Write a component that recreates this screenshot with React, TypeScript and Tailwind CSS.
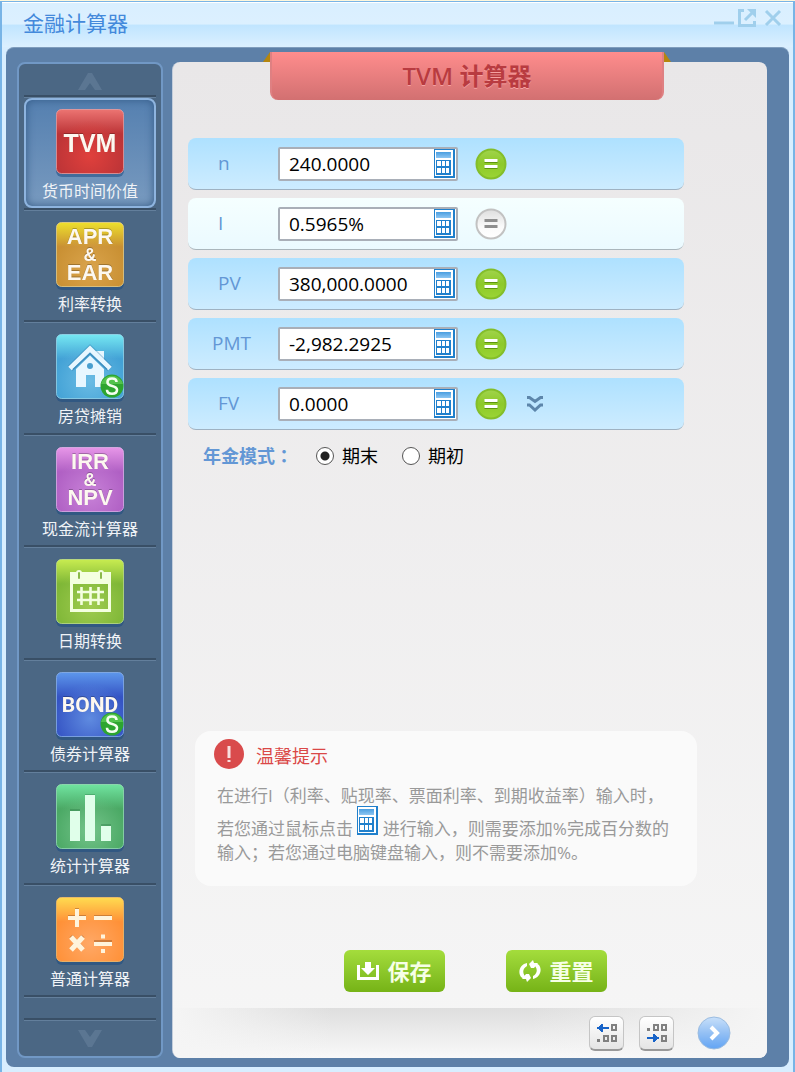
import React from "react";

const fonts = "[font-family:'Open_Sans','Noto_Sans_CJK_SC',sans-serif]";

function CalcGlyph({ className }: { className: string }) {
  return (
    <svg viewBox="0 0 21 29" className={className} aria-hidden="true" shapeRendering="crispEdges">
      <defs>
        <linearGradient id="lcd" x1="0" y1="0" x2="0" y2="1">
          <stop offset="0" stopColor="#4a9ee0" />
          <stop offset="1" stopColor="#8ec6f2" />
        </linearGradient>
      </defs>
      <rect width="21" height="29" fill="#2080cc" />
      <rect x="1" y="1" width="18" height="26" fill="#fff" />
      <rect x="2" y="3" width="15" height="6" fill="url(#lcd)" />
      <rect x="2" y="11" width="15" height="15" fill="#2080cc" />
      {[3, 8, 12].map((x) => (
        <g key={x} fill="#fff">
          <rect x={x} y="12" width={x === 3 ? 4 : 3} height="5" />
          <rect x={x} y="19" width={x === 3 ? 4 : 3} height="5" />
        </g>
      ))}
    </svg>
  );
}

type Tone = { a: string; b: string; c: string; edge: string };

function Tile({ id, tone, children }: { id: string; tone: Tone; children: React.ReactNode }) {
  return (
    <svg viewBox="0 0 70 70" className="size-[70px] shrink-0" aria-hidden="true">
      <defs>
        <linearGradient id={id + "-l"} x1="0" y1="0" x2="0" y2="1">
          <stop offset="0" stopColor={tone.a} />
          <stop offset="0.38" stopColor={tone.b} />
          <stop offset="1" stopColor={tone.b} />
        </linearGradient>
        <radialGradient id={id + "-r"} cx="0.5" cy="0.72" r="0.55">
          <stop offset="0" stopColor={tone.c} />
          <stop offset="1" stopColor={tone.c} stopOpacity="0" />
        </radialGradient>
      </defs>
      <rect x="1" y="3" width="68" height="66" rx="6" fill="#1d4c82" opacity="0.55" />
      <rect x="1.5" y="1.5" width="67" height="64" rx="5" fill={"url(#" + id + "-l)"} />
      <rect x="1.5" y="1.5" width="67" height="64" rx="5" fill={"url(#" + id + "-r)"} stroke={tone.edge} strokeOpacity="0.75" />
      {children}
    </svg>
  );
}

function TileText({ x = 35, y, size, children, font = "Liberation Sans" }: { x?: number; y: number; size: number; children: string; font?: string }) {
  return (
    <text
      x={x}
      y={y}
      fill="#fdf8f0"
      fontFamily={"'" + font + "', sans-serif"}
      fontWeight="700"
      fontSize={size}
      textAnchor="middle"
      className="[filter:drop-shadow(0_-1px_0_#00000040)]"
    >
      {children}
    </text>
  );
}

function Coin() {
  return (
    <g>
      <circle cx="57" cy="53" r="11.5" fill="#2da52f" />
      <path d="M46 51a11.5 11.5 0 0 1 22 0z" fill="#62d058" opacity="0.7" />
      <path d="M61.5 49c0-2.5-2-3.500-4.500-3.500s-4.500 1.200-4.500 3.700c0 5 9.500 2.600 9.500 7.600 0 2.500-2.200 3.900-5 3.900s-5-1.200-5-4" fill="none" stroke="#f4fff0" strokeWidth="2.600" />
    </g>
  );
}

const items: { name: string; tone: Tone; art: React.ReactNode }[] = [
  {
    name: "货币时间价值",
    tone: { a: "#ec7472", b: "#bc3437", c: "#e0403c", edge: "#f0a0a0" },
    art: <TileText y={44} size={25}>TVM</TileText>,
  },
  {
    name: "利率转换",
    tone: { a: "#eee02c", b: "#c99033", c: "#daa44c", edge: "#f0d489" },
    art: (
      <>
        <TileText y={23} size={22}>APR</TileText>
        <TileText y={40} size={18}>&amp;</TileText>
        <TileText y={59} size={22}>EAR</TileText>
      </>
    ),
  },
  {
    name: "房贷摊销",
    tone: { a: "#75e8f2", b: "#43a2d6", c: "#6bbce4", edge: "#9bdcf0" },
    art: (
      <>
        <path d="M41 18h8v12l-8-7z" fill="#e8f7ff" />
        <path d="M15 35.5L35 16l20 19.5" fill="none" stroke="#2a78aa" strokeOpacity="0.35" strokeWidth="7" />
        <path d="M15 35.5L35 16l20 19.5" fill="none" stroke="#e8f7ff" strokeWidth="5" />
        <path d="M21 36l14-13.5L49 36v18h-9V42h-9v12H21z" fill="#e8f7ff" />
        <path d="M18 36.5L35 20.5l17 16" fill="none" stroke="#3f8fc0" strokeWidth="1.5" />
        <circle cx="35" cy="33" r="3" fill="#4a9fcf" />
        <Coin />
      </>
    ),
  },
  {
    name: "现金流计算器",
    tone: { a: "#e796e8", b: "#b060c4", c: "#c882d8", edge: "#e8b4ee" },
    art: (
      <>
        <TileText y={23} size={22}>IRR</TileText>
        <TileText y={40} size={18}>&amp;</TileText>
        <TileText y={59} size={22}>NPV</TileText>
      </>
    ),
  },
  {
    name: "日期转换",
    tone: { a: "#c8ec50", b: "#7fb737", c: "#a0cc50", edge: "#c5e58a" },
    art: (
      <>
        <path d="M15 14h41v40H15zM18 26v25h35V26z" fill="#f4ffe0" fillRule="evenodd" />
        <path d="M26.5 29v18M35.5 29v18M43.5 29v18M22 34h27M22 42h27" stroke="#f4ffe0" strokeWidth="2.6" />
        <rect x="22" y="13" width="4" height="9" rx="2" fill="#8bb94a" stroke="#f4ffe0" strokeWidth="2" />
        <rect x="44" y="13" width="4" height="9" rx="2" fill="#8bb94a" stroke="#f4ffe0" strokeWidth="2" />
      </>
    ),
  },
  {
    name: "债券计算器",
    tone: { a: "#5d97ec", b: "#3554c4", c: "#5f8be0", edge: "#8db4f0" },
    art: (
      <>
        <TileText y={41} size={21} font="Roboto">BOND</TileText>
        <Coin />
      </>
    ),
  },
  {
    name: "统计计算器",
    tone: { a: "#70e4a0", b: "#4ba965", c: "#74c48a", edge: "#9be5b4" },
    art: (
      <>
        <path d="M15 26h10v31H15zM30 11h10v46H30zM46 41h10v16H46z" fill="#1d6a38" opacity="0.3" />
        <path d="M15 28h10v30H15zM30 12h10v46H30zM46 43h10v15H46z" fill="#e0ffea" />
      </>
    ),
  },
  {
    name: "普通计算器",
    tone: { a: "#ffdc50", b: "#ff9138", c: "#ffa866", edge: "#ffc26a" },
    art: (
      <g fill="none" strokeWidth="4">
        <path d="M13 21h18M22 12v18M39 21h18M39 46h18M16 40l12 13M28 40L16 53" stroke="#a6602a" opacity="0.55" />
        <path d="M13 22h18M22 13v18M39 22h18M39 48h18M46 40.5h4M46 55h4" stroke="#fff4dc" />
        <path d="M16 41l12 13M28 41L16 54" stroke="#fff4dc" strokeWidth="5" />
      </g>
    ),
  },
];

const fields = [
  { name: "n", value: "240.0000", on: true },
  { name: "I", value: "0.5965%", on: false },
  { name: "PV", value: "380,000.0000", on: true },
  { name: "PMT", value: "-2,982.2925", on: true },
  { name: "FV", value: "0.0000", on: true },
];

function Groove() {
  return <div className="h-[3px] shrink-0 border-t-2 border-b border-t-[#394f66] border-b-[#637f9c]" />;
}

function Sidebar() {
  return (
    <nav aria-label="计算器" className="flex w-[146px] shrink-0 flex-col rounded-lg border-2 border-[#7198c5] bg-[#4b6784] px-[5px]">
      <button aria-label="向上" className="flex h-[31px] shrink-0 items-center justify-center">
        <svg viewBox="0 0 24 17" className="mt-1 h-[17px] w-6"><path d="M0 17L10 0h4l10 17h-7l-5-7-5 7z" fill="#5b7692" /></svg>
      </button>
      <div className="flex flex-1 flex-col">
        {items.map((item, i) => (
          <div key={item.name} className="flex flex-1 flex-col">
            <Groove />
            <button
              aria-current={i === 0 ? "page" : undefined}
              className={
                i === 0
                  ? "flex flex-1 flex-col items-center rounded-lg border-2 border-[#8eb4df] bg-linear-to-b from-[#5580b0] to-[#789abf] pt-2 shadow-[inset_0_0_8px_#355b87]"
                  : "flex flex-1 flex-col items-center pt-[10px]"
              }
            >
              <Tile id={"tile" + i} tone={item.tone}>{item.art}</Tile>
              <span className="mt-[3px] text-base leading-5 whitespace-nowrap text-[#f0f3f7]">{item.name}</span>
            </button>
          </div>
        ))}
      </div>
      <Groove />
      <div className="h-5 shrink-0" />
      <Groove />
      <button aria-label="向下" className="flex h-[35px] shrink-0 items-center justify-center">
        <svg viewBox="0 0 24 17" className="h-[17px] w-6"><path d="M0 0l10 17h4L24 0h-7l-5 7-5-7z" fill="#5b7692" /></svg>
      </button>
    </nav>
  );
}

function Equals({ on, name }: { on: boolean; name: string }) {
  return (
    <button type="button" aria-label={"计算 " + name} className="size-8 shrink-0">
      <svg viewBox="0 0 32 32" className="size-8">
        <defs>
          <linearGradient id="eq-on" x1="0" y1="0" x2="0" y2="1"><stop offset="0" stopColor="#a0d44c" /><stop offset="0.5" stopColor="#8dc929" /><stop offset="1" stopColor="#9bd535" /></linearGradient>
          <linearGradient id="eq-off" x1="0" y1="0" x2="0" y2="1"><stop offset="0" stopColor="#dedede" /><stop offset="0.6" stopColor="#fafafa" /><stop offset="1" stopColor="#ffffff" /></linearGradient>
        </defs>
        <circle cx="16" cy="16" r="14.5" fill={on ? "url(#eq-on)" : "url(#eq-off)"} stroke={on ? "#84be2a" : "#c2c2c2"} strokeWidth="2" />
        {on && <path d="M9.5 14h13M9.5 20h13" stroke="#5f960d" strokeWidth="2" />}
        <path d="M9.5 12.5h13M9.5 18.5h13" stroke={on ? "#fff" : "#8e8e8e"} strokeWidth="3" />
      </svg>
    </button>
  );
}

const radio = "size-[18px] appearance-none rounded-full border border-[#555] bg-white checked:bg-[radial-gradient(circle,#222_4px,#fff_5px)]";
const greenButton = "flex h-[42px] w-[101px] items-center justify-center gap-2 rounded-md bg-linear-to-b from-[#a4dd3c] to-[#76b316] text-[22px] font-bold text-[#f6ffe6]";
const stepButton = "flex size-[35px] items-center justify-center rounded-md border border-b-2 border-[#c5c5c5] border-b-[#999] bg-linear-to-b from-white to-[#e5e5e5]";

function Main() {
  return (
    <main className="flex min-w-0 flex-1 flex-col rounded-lg border-l border-[#c3cddb] bg-linear-to-b from-[#e9e7e8] to-[#f6f6f6]">
      <div className="-mt-[10px] flex justify-center pr-[6px]">
        <div className="flex items-start">
          <svg viewBox="0 0 7 10" className="h-[10px] w-[7px]"><path d="M7 0v10H0z" fill="#b5860e" /></svg>
          <h1 className="flex h-12 w-[394px] items-center justify-center rounded-b-lg border-x-2 border-[#df8082] bg-linear-to-b from-[#ff8d8d] to-[#d27071] text-2xl font-semibold text-[#b93b40] [text-shadow:0_1px_0_#f5a1a1]">TVM 计算器</h1>
          <svg viewBox="0 0 7 10" className="h-[10px] w-[7px]"><path d="M0 0v10h7z" fill="#b5860e" /></svg>
        </div>
      </div>
      <form className="mt-[38px] mr-[83px] ml-[15px] flex flex-col gap-2" onSubmit={(e) => e.preventDefault()}>
        {fields.map((f) => (
          <div
            key={f.name}
            className={
              f.on
                ? "flex h-[52px] items-center rounded-lg border-b border-[#9fb2c2] bg-linear-to-b from-[#aee1ff] to-[#cdecff]"
                : "flex h-[52px] items-center rounded-lg border-b border-[#aab6bc] bg-linear-to-b from-[#f5ffff] to-[#ebfaff]"
            }
          >
            <label htmlFor={"field-" + f.name} className={f.name === "PMT" ? "w-[90px] pl-6 text-[19px] text-[#6397d5]" : "w-[90px] pl-[30px] text-[19px] text-[#6397d5]"}>
              {f.name}
            </label>
            <div className="flex h-[34px] w-[180px] items-center rounded-xs border-2 border-[#a9afb8] bg-white">
              <input id={"field-" + f.name} defaultValue={f.value} className="h-full min-w-0 flex-1 pl-[9px] text-[19px] text-black outline-none" />
              <button type="button" aria-label={"键盘输入 " + f.name} className="mr-px"><CalcGlyph className="block h-[29px] w-[21px]" /></button>
            </div>
            <div className="ml-[17px] flex items-center gap-5">
              <Equals on={f.on} name={f.name} />
              {f.name === "FV" && (
                <button type="button" aria-label="展开">
                  <svg viewBox="0 0 16 16" className="block size-4" fill="none" stroke="#5d86ab" strokeWidth="3"><path d="M0 1.5h2.5l5.5 4 5.5-4H16M0 9h2.5L8 14l5.5-5H16" /></svg>
                </button>
              )}
            </div>
          </div>
        ))}
        <fieldset className="mt-[3px] ml-[15px] flex h-7 items-center text-lg">
          <legend className="float-left w-[113px] font-bold text-[#6397d5]">年金模式<span className="[font-family:'Noto_Sans_CJK_TC',sans-serif]">：</span></legend>
          <label className="flex items-center gap-2 text-black">
            <input type="radio" name="mode" defaultChecked className={radio} />
            期末
          </label>
          <label className="ml-6 flex items-center gap-2 text-black">
            <input type="radio" name="mode" className={radio} />
            期初
          </label>
        </fieldset>
      </form>
      <div className="flex-1" />
      <section className="mr-[70px] ml-[22px] h-[155px] rounded-2xl bg-[#fafafa] pt-[7px] pr-4 pl-[22px]">
        <h2 className="-ml-1 flex items-center gap-[11px] text-lg text-[#da4847]">
          <svg viewBox="0 0 32 32" className="size-8" aria-hidden="true"><circle cx="16" cy="16" r="15" fill="#d94b4c" /><path d="M14.5 8h3v12h-3zM14.5 22h3v2h-3z" fill="#f9dfdf" /></svg>
          <span className="pt-1">温馨提示</span>
        </h2>
        <p className="mt-[14px] text-[17px] leading-6 whitespace-nowrap text-[#999]">
          在进行I（利率、贴现率、票面利率、到期收益率）输入时，
          <br />
          若您通过鼠标点击 <CalcGlyph className="-mt-0.5 inline-block h-[29px] w-[21px] align-baseline" /> 进行输入，则需要添加%完成百分数的
          <br />
          输入；若您通过电脑键盘输入，则不需要添加%。
        </p>
      </section>
      <div className="mt-16 flex gap-[61px] pl-[171px]">
        <button className={greenButton}>
          <svg viewBox="0 0 22 18" className="h-[18px] w-[22px]" fill="none" stroke="#fff" strokeWidth="3"><path d="M1.5 3v13.5h19V3" /><path d="M8 0h6v6h4l-7 7-7-7h4z" fill="#fff" stroke="none" /></svg>
          保存
        </button>
        <button className={greenButton}>
          <svg viewBox="0 0 22 22" className="size-[22px]"><path d="M8 3C2 4-2 11 2 17l3 2 3-1c-5-4-5-9 0-12zM14 19c6-1 10-8 6-14l-3-2-3 1c5 4 5 9 0 12z" fill="#fff" /><path d="M10 4l4-4 1 3h4l-4 5h-3zM12 18l-4 4-1-3H3l4-5h3z" fill="#fff" /></svg>
          重置
        </button>
      </div>
      <footer className="mt-4 flex h-[50px] items-center justify-end gap-[15px] rounded-b-lg bg-[linear-gradient(90deg,#f5f5f5_0%,#f5f5f500_27%,#f5f5f500_60%,#f5f5f5_100%),linear-gradient(#dedede,#f9f9f9)] pr-9">
        <button aria-label="上一项" className={stepButton}>
          <svg viewBox="0 0 20 20" className="size-5" shapeRendering="crispEdges">
            <path d="M0 4h2V3h1V2h1V1h2v3h6v2H6v3H4V8H3V7H2V6H0z" fill="#1763c8" />
            <path d="M14 1h6v7h-6zM16 3v3h2V3zM6 12h6v7H6zM8 14v3h2V14zM14 12h6v7h-6zM16 14v3h2V14zM0 16h3v3H0z" fill="#808080" fillRule="evenodd" />
          </svg>
        </button>
        <button aria-label="下一项" className={stepButton}>
          <svg viewBox="0 0 20 20" className="size-5" shapeRendering="crispEdges">
            <path d="M0 14h6v-3h2v1h1v1h1v1h2v2h-2v1H9v1H8v1H6v-3H0z" fill="#1763c8" />
            <path d="M6 1h6v7H6zM8 3v3h2V3zM14 1h6v7h-6zM16 3v3h2V3zM14 12h6v7h-6zM16 14v3h2V14zM0 5h3v3H0z" fill="#808080" fillRule="evenodd" />
          </svg>
        </button>
        <button aria-label="前进" className="ml-2 size-[34px]">
          <svg viewBox="0 0 34 34" className="size-[34px]"><defs><linearGradient id="go" x1="0" y1="0" x2="0" y2="1"><stop offset="0" stopColor="#c8e0fa" /><stop offset="0.5" stopColor="#94c0f4" /><stop offset="1" stopColor="#62a4f4" /></linearGradient></defs><circle cx="17" cy="17" r="16" fill="url(#go)" stroke="#9bbce0" /><path d="M14 11l6 6-6 6" fill="none" stroke="#fff" strokeWidth="4" /></svg>
        </button>
      </footer>
    </main>
  );
}

export default function App() {
  return (
    <div className={"flex min-h-screen flex-col border-t border-[#fdf7dd] bg-[#d8eeff] " + fonts}>
      <div className="flex flex-1 flex-col border-x-2 border-t border-[#78b4e6] px-1 pb-[5px]">
        <header className="-mx-1 flex h-[45px] shrink-0 items-start justify-between border-t border-white bg-[linear-gradient(#d9efff_0%,#dcf0ff_48%,#c0e5ff_50%,#dbf0ff_100%)] pr-[11px] pl-[21px]">
          <div className="pt-1 text-[21px] leading-8 text-[#4389db]">金融计算器</div>
          <div className="flex items-center gap-1 pt-[5px] text-[#a0cfec]">
            <button aria-label="最小化"><svg viewBox="0 0 20 20" className="size-5"><path d="M0 15h20" stroke="currentColor" strokeWidth="3" /></svg></button>
            <button aria-label="弹出"><svg viewBox="0 0 18 18" className="size-[18px]" fill="none" stroke="currentColor" strokeWidth="3"><path d="M6 1.5H1.5v15h15V12M7 11l7-7" /><path d="M9 0h9v9z" fill="currentColor" stroke="none" /></svg></button>
            <button aria-label="关闭" className="ml-1"><svg viewBox="0 0 18 18" className="size-[18px]" fill="none" stroke="currentColor" strokeWidth="3"><path d="M2 2l14 14M16 2L2 16" /></svg></button>
          </div>
        </header>
        <div className="flex flex-1 rounded-lg border-t border-[#7f9dbd] bg-[#5d80a8] pt-[14px] pr-[22px] pb-[9px] pl-[11px]">
          <Sidebar />
          <div className="w-[9px] shrink-0" />
          <Main />
        </div>
      </div>
    </div>
  );
}
